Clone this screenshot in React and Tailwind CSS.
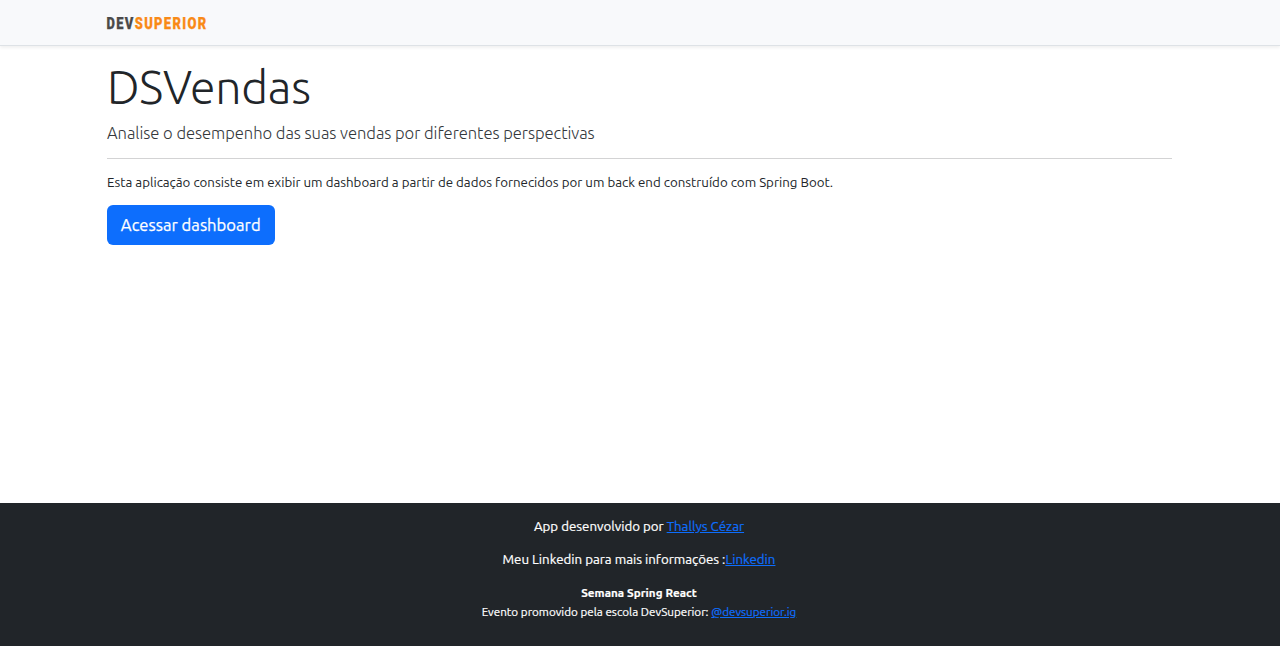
function Logo() {
  return (
    <svg width="106" height="24" viewBox="0 0 106 24" role="img" aria-label="DevSuperior" className="block overflow-visible">
      <text
        x="-0.5"
        y="17.4"
        className="font-['Roboto',sans-serif] font-black"
        fontSize="15.8"
        letterSpacing="1.6"
        strokeWidth="0.25"
        textLength="101"
        lengthAdjust="spacingAndGlyphs"
      >
        <tspan fill="#4a4a4a" stroke="#4a4a4a">DEV</tspan>
        <tspan fill="#f98a17" stroke="#f98a17">SUPERIOR</tspan>
      </text>
    </svg>
  );
}

function NavBar() {
  return (
    <header className="h-[46px] border-b border-[#dee2e6] bg-[#f8f9fb] shadow-[0_2px_3px_rgba(0,0,0,0.06)]">
      <div className="ml-[107px] flex h-full items-center pt-0.5">
        <Logo />
      </div>
    </header>
  );
}

function Footer() {
  return (
    <footer className="h-[143px] bg-[#212529] pt-[14px] pr-[2px] text-center text-white [-webkit-text-stroke:0.2px]">
      <p className="h-[33px] text-[13.3px] leading-5">
        App desenvolvido por <a href="#" className="text-[#0d6efd] underline">Thallys Cézar</a>
      </p>
      <p className="h-[33px] text-[13.3px] leading-5">
        Meu Linkedin para mais informações :<a href="#" className="text-[#0d6efd] underline">Linkedin</a>
      </p>
      <p className="text-[11.65px] leading-[19px] font-bold tracking-[0.05px]">Semana Spring React</p>
      <p className="text-[11.65px] leading-5">
        Evento promovido pela escola DevSuperior: <a href="#" className="text-[#0d6efd] underline">@devsuperior.ig</a>
      </p>
    </footer>
  );
}

export default function App() {
  return (
    <div className="flex h-[646px] flex-col overflow-hidden bg-white font-['Ubuntu','Noto_Sans',sans-serif] text-[#212529]">
      <NavBar />
      <main className="mr-[108px] ml-[107px] flex-1">
        <h1 className="pt-[13px] text-[46.4px] leading-[56px] font-light tracking-[-0.25px] whitespace-nowrap">DSVendas</h1>
        <p className="mt-[6px] text-[16.6px] leading-[25px] font-light tracking-[-0.045px] whitespace-nowrap text-[#34383c]">
          Analise o desempenho das suas vendas por diferentes perspectivas
        </p>
        <hr className="mt-[12px] border-[#d3d3d4]" />
        <p className="mt-[14px] text-[13.3px] leading-5 whitespace-nowrap">
          Esta aplicação consiste em exibir um dashboard a partir de dados fornecidos por um back end construído com Spring Boot.
        </p>
        <a href="#" className="mt-[12px] flex h-[39.5px] w-[167.5px] items-center justify-center rounded-md bg-[#0d6efd] pt-px text-[16.6px] tracking-[0.02px] whitespace-nowrap text-white [-webkit-text-stroke:0.25px]">
          Acessar dashboard
        </a>
      </main>
      <Footer />
    </div>
  );
}
